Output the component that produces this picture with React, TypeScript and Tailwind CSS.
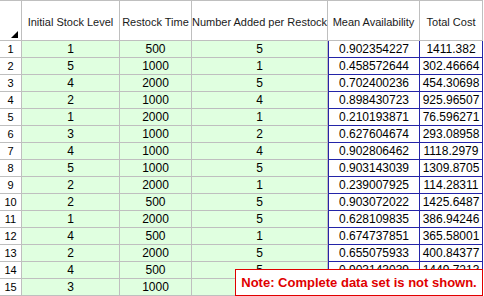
import React from "react";

const rows: [string, string, string, string, string][] = [
  ["1", "500", "5", "0.902354227", "1411.382"],
  ["5", "1000", "1", "0.458572644", "302.46664"],
  ["4", "2000", "5", "0.702400236", "454.30698"],
  ["2", "1000", "4", "0.898430723", "925.96507"],
  ["1", "2000", "1", "0.210193871", "76.596271"],
  ["3", "1000", "2", "0.627604674", "293.08958"],
  ["4", "1000", "4", "0.902806462", "1118.2979"],
  ["5", "1000", "5", "0.903143039", "1309.8705"],
  ["2", "2000", "1", "0.239007925", "114.28311"],
  ["2", "500", "5", "0.903072022", "1425.6487"],
  ["1", "2000", "5", "0.628109835", "386.94246"],
  ["4", "500", "1", "0.674737851", "365.58001"],
  ["2", "2000", "5", "0.655075933", "400.84377"],
  ["4", "500", "5", "0.903143039", "1449.7213"],
  ["3", "1000", "", "", ""],
];

export default function App() {
  return (
    <div
      className="relative w-[484px] h-[296px] overflow-hidden bg-white text-black"
      style={{ fontFamily: '"Liberation Sans", Arial, sans-serif' }}
    >
      <div className="grid w-[483px] grid-cols-[22px_98px_72px_136px_92px_63px] border-t border-[#bfbfbf]">
        {/* header */}
        <div className="relative h-[40px] border-r border-b border-[#bfbfbf] bg-white">
          <svg className="absolute left-0 top-0" width="22" height="40" viewBox="0 0 22 40">
            <polygon points="18,30 18,37 11,37" fill="#000" />
          </svg>
        </div>
        {["Initial Stock Level", "Restock Time", "Number Added per Restock", "Mean Availability", "Total Cost"].map((h) => (
          <div
            key={h}
            className="flex h-[40px] items-center justify-center whitespace-nowrap border-r border-b border-[#bfbfbf] bg-white pt-[3px] text-[11px] text-[#1a1a1a]"
          >
            {h}
          </div>
        ))}
        {rows.map((r, i) => (
          <React.Fragment key={i}>
            <div className="flex h-[17px] items-center justify-center border-r border-b border-[#bfbfbf] bg-white text-[11px] leading-none">
              {i + 1}
            </div>
            <div className="flex h-[17px] items-center justify-center border-r border-b border-[#bfbfbf] bg-[#e0ffe0] text-[12px] leading-none">
              {r[0]}
            </div>
            <div className="flex h-[17px] items-center justify-center border-r border-b border-[#bfbfbf] bg-[#e0ffe0] text-[12px] leading-none">
              {r[1]}
            </div>
            <div className="flex h-[17px] items-center justify-center border-r border-b border-[#bfbfbf] bg-[#e0ffe0] text-[12px] leading-none">
              {r[2]}
            </div>
            <div className="flex h-[17px] items-center justify-center border-l border-r border-b border-[#2424a8] bg-white text-[12px] leading-none">
              {r[3]}
            </div>
            <div className="flex h-[17px] items-center justify-center whitespace-nowrap border-r border-b border-[#2424a8] bg-white text-[12px] leading-none">
              {r[4]}
            </div>
          </React.Fragment>
        ))}
      </div>
      <div className="absolute left-[235px] top-[269px] flex h-[27px] w-[248px] items-center justify-center whitespace-nowrap border border-[#e00000] bg-white text-[13px] font-bold text-[#e00000]">
        Note: Complete data set is not shown.
      </div>
    </div>
  );
}
